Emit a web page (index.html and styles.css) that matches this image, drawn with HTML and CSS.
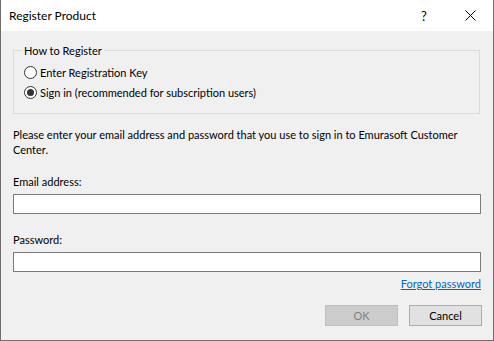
FILE: index.html
```html
<!DOCTYPE html>
<html lang="en">
  <head>
    <meta charset="UTF-8" />
    <meta name="viewport" content="width=device-width, initial-scale=1.0" />
    <title>Register Product</title>
    <link rel="stylesheet" href="styles.css">
  </head>

  <body>
    <div class="Dialog">
      <div class="TitleBar">
        <span class="title">Register Product</span>
        <span class="help">?</span>
        <span class="close">
          <svg width="11" height="11" viewBox="0 0 11 11">
            <path d="M0.5 0.5 L10.5 10.5 M10.5 0.5 L0.5 10.5" stroke="#000" stroke-width="1" fill="none" />
          </svg>
        </span>
      </div>

      <div class="Content">
        <fieldset class="group">
          <legend>How to Register</legend>
          <label class="radio"><span class="dot"></span>Enter Registration Key</label>
          <label class="radio"><span class="dot checked"></span>Sign in (recommended for subscription users)</label>
        </fieldset>

        <p class="info">
          Please enter your email address and password that you use to sign in to Emurasoft Customer Center.
        </p>

        <label class="fieldLabel" for="email">Email address:</label>
        <input type="text" id="email" class="box" />

        <label class="fieldLabel pass" for="password">Password:</label>
        <input type="password" id="password" class="box" />

        <div class="forgot"><a href="#">Forgot password</a></div>

        <div class="btns">
          <button class="btn" disabled>OK</button>
          <button class="btn">Cancel</button>
        </div>
      </div>
    </div>
  </body>
</html>
```

FILE: styles.css
```css
body {
  margin: 0;
  font-family: Lato, "Liberation Sans", sans-serif;
  font-size: 11px;
  color: #000;
}

.Dialog {
  width: 494px;
  height: 341px;
  box-sizing: border-box;
  border: 1px solid #6e6e6e;
  border-top: none;
  background-color: #f0f0f0;
  display: flex;
  flex-direction: column;
}

.TitleBar {
  height: 31px;
  background-color: #fff;
  display: flex;
  align-items: center;
  padding-left: 8px;
}

.TitleBar .title {
  flex: 1;
  font-size: 12px;
}

.TitleBar .help {
  width: 46px;
  text-align: center;
  font-size: 13px;
}

.TitleBar .close {
  width: 46px;
  display: flex;
  justify-content: center;
}

.Content {
  padding: 12px 11px 0 12px;
}

.group {
  margin: 0;
  border: 1px solid #dcdcdc;
  padding: 4px 8px 11px 10px;
  width: 467px;
  box-sizing: border-box;
}

.group legend {
  padding: 0 2px;
  margin-left: -2px;
  line-height: 15px;
}

.radio {
  display: flex;
  align-items: center;
  height: 20px;
  gap: 3px;
}

.dot {
  width: 11px;
  height: 11px;
  border: 1px solid #333;
  border-radius: 50%;
  background-color: #fff;
  display: flex;
  align-items: center;
  justify-content: center;
}

.dot.checked::after {
  content: "";
  width: 7px;
  height: 7px;
  border-radius: 50%;
  background-color: #333;
}

.info {
  margin: 13px 0 0 0;
  line-height: 15px;
}

.fieldLabel {
  display: block;
  margin-top: 17px;
  line-height: 15px;
}

.fieldLabel.pass {
  margin-top: 18px;
}

.box {
  display: block;
  margin-top: 5px;
  width: 468px;
  height: 20px;
  box-sizing: border-box;
  border: 1px solid #7a7a7a;
  background-color: #fff;
  padding: 0 2px;
}

.forgot {
  text-align: right;
  width: 468px;
  margin-top: 4px;
  line-height: 15px;
}

.forgot a {
  color: #0066cc;
}

.btns {
  display: flex;
  justify-content: flex-end;
  gap: 11px;
  width: 469px;
  margin-top: 14px;
}

.btn {
  width: 73px;
  height: 21px;
  font-family: Lato, "Liberation Sans", sans-serif;
  font-size: 11px;
  background-color: #e1e1e1;
  border: 1px solid #adadad;
  padding: 0;
  color: #000;
}

.btn:disabled {
  background-color: #cccccc;
  border-color: #bfbfbf;
  color: #838383;
}
```
